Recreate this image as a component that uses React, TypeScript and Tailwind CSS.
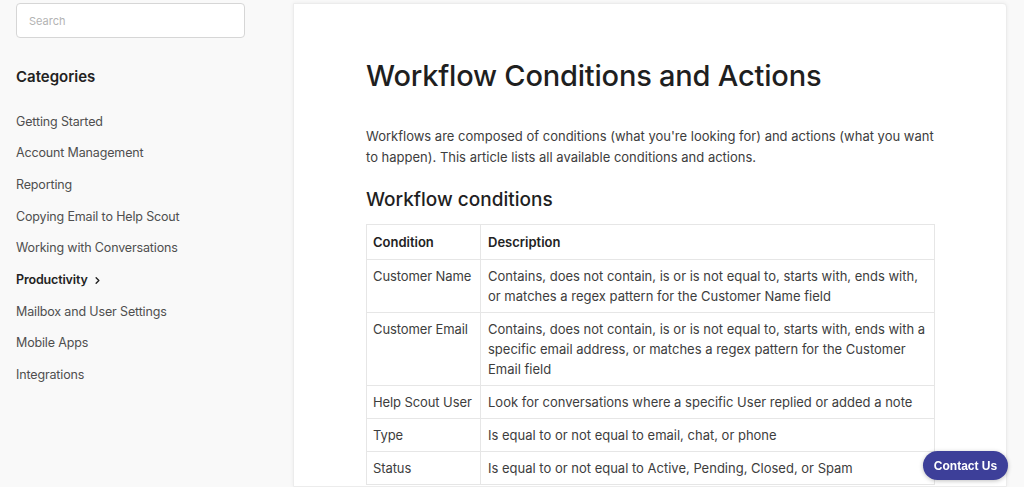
import React from "react";
import { ChevronRight } from "lucide-react";

const categories = [
  "Getting Started",
  "Account Management",
  "Reporting",
  "Copying Email to Help Scout",
  "Working with Conversations",
  "Productivity",
  "Mailbox and User Settings",
  "Mobile Apps",
  "Integrations",
];

const conditions = [
  {
    name: "Customer Name",
    desc: "Contains, does not contain, is or is not equal to, starts with, ends with, or matches a regex pattern for the Customer Name field",
  },
  {
    name: "Customer Email",
    desc: "Contains, does not contain, is or is not equal to, starts with, ends with a specific email address, or matches a regex pattern for the Customer Email field",
  },
  {
    name: "Help Scout User",
    desc: "Look for conversations where a specific User replied or added a note",
  },
  { name: "Type", desc: "Is equal to or not equal to email, chat, or phone" },
  { name: "Status", desc: "Is equal to or not equal to Active, Pending, Closed, or Spam" },
];

const App = () => {
  return (
    <div className="flex h-[487px] overflow-hidden bg-[#f9f9f9] font-['Inter',sans-serif] text-[#3d3d3d]">
      {/* Sidebar */}
      <aside className="w-[293px] shrink-0 pl-4 pt-[3px]">
        <input
          type="text"
          placeholder="Search"
          className="h-[35px] w-[229px] rounded border border-[#d6d6d6] bg-white px-3 text-[11px] placeholder:text-[#b3b3b3] focus:outline-none"
        />
        <h3 className="mt-[28px] text-[15px] font-semibold text-[#222]">Categories</h3>
        <ul className="mt-[24px] flex flex-col gap-[12.7px]">
          {categories.map((c) => (
            <li key={c} className="flex h-[19px] items-center text-[12.5px] tracking-[-0.15px]">
              {c === "Productivity" ? (
                <span className="flex items-center gap-1 font-semibold text-[#222]">
                  {c}
                  <ChevronRight size={11} strokeWidth={3} />
                </span>
              ) : (
                <span className="text-[#4f4f4f]">{c}</span>
              )}
            </li>
          ))}
        </ul>
      </aside>

      {/* Article */}
      <main className="flex-1 pr-[17px] pt-[3px]">
        <article className="h-full rounded-tr-[4px] border border-[#ececec] bg-white pl-[72px] pr-[71px] pt-[53px] shadow-[0_0_4px_rgba(0,0,0,0.06)]">
          <h1 className="text-[29px] font-medium leading-[38px] tracking-[-0.2px] text-[#1f1f1f]">
            Workflow Conditions and Actions
          </h1>
          <p className="mt-[31px] text-[13px] leading-[21px] text-[#3d3d3d]">
            Workflows are composed of conditions (what you're looking for) and actions (what you want to happen). This article lists all available conditions and actions.
          </p>
          <h2 className="mt-[19px] text-[19px] font-medium leading-[26px] text-[#1f1f1f]">
            Workflow conditions
          </h2>
          <table className="mt-[11px] w-full border-collapse text-[13px] leading-[20px]">
            <thead>
              <tr>
                <th className="w-[114px] whitespace-nowrap border border-[#e6e6e6] px-[6px] py-[7px] text-left font-semibold text-[#222]">
                  Condition
                </th>
                <th className="border border-[#e6e6e6] px-[7px] py-[7px] text-left font-semibold text-[#222]">
                  Description
                </th>
              </tr>
            </thead>
            <tbody>
              {conditions.map((r) => (
                <tr key={r.name}>
                  <td className="whitespace-nowrap border border-[#e6e6e6] px-[6px] py-[6px] align-top tracking-[-0.1px]">
                    {r.name}
                  </td>
                  <td className="border border-[#e6e6e6] px-[7px] py-[6px] align-top">{r.desc}</td>
                </tr>
              ))}
            </tbody>
          </table>
        </article>
      </main>

      <button className="fixed bottom-[7px] right-[16px] h-[29px] w-[85px] rounded-full bg-[#3d3f99] font-['Liberation_Sans',sans-serif] text-[12px] font-bold text-white shadow-[0_1px_4px_rgba(0,0,0,0.25)]">
        Contact Us
      </button>
    </div>
  );
};

export default App;
